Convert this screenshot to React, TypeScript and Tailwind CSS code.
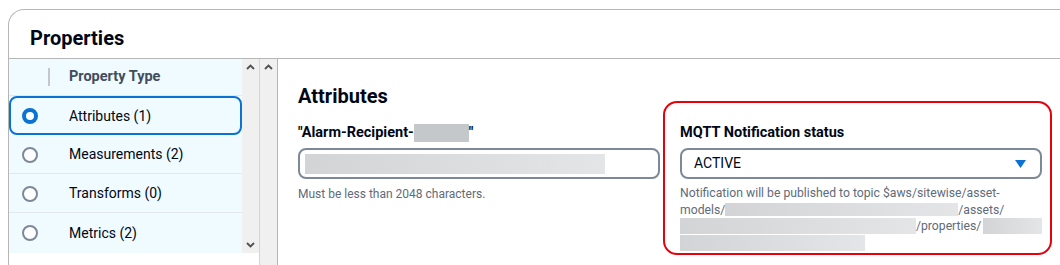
import React from "react";

const ROWS = [
  { label: "Attributes (1)", selected: true },
  { label: "Measurements (2)", selected: false },
  { label: "Transforms (0)", selected: false },
  { label: "Metrics (2)", selected: false },
];

function Radio({ checked }: { checked: boolean }) {
  return checked ? (
    <svg width="16" height="16" viewBox="0 0 16 16">
      <circle cx="8" cy="8" r="6" fill="#ffffff" stroke="#0972d3" strokeWidth="4" />
    </svg>
  ) : (
    <svg width="16" height="16" viewBox="0 0 16 16">
      <circle cx="8" cy="8" r="7" fill="#ffffff" stroke="#7d8998" strokeWidth="2" />
    </svg>
  );
}

function Chevron({ dir }: { dir: "up" | "down" }) {
  return (
    <svg width="9" height="6" viewBox="0 0 9 6">
      <path
        d={dir === "up" ? "M1 5 L4.5 1.5 L8 5" : "M1 1 L4.5 4.5 L8 1"}
        fill="none"
        stroke="#505050"
        strokeWidth="1.8"
      />
    </svg>
  );
}

function Blur({ w, h, className = "" }: { w: string; h: string; className?: string }) {
  return (
    <span
      className={`inline-block align-middle bg-gradient-to-r from-[#d3d4d6] to-[#e4e5e6] ${w} ${h} ${className}`}
    />
  );
}

function TypeList() {
  return (
    <div className="w-[233px] h-[194px] bg-[#f0fbff] flex flex-col">
      <div className="h-[37px] flex items-center border-b border-[#e3e8ee]">
        <div className="ml-[39px] w-[2px] h-[18px] bg-[#c6c6cd]" />
        <span className="ml-[19px] text-[14.5px] font-bold text-[#414d5c]">Property Type</span>
      </div>
      {ROWS.map((row, i) =>
        row.selected ? (
          <div
            key={row.label}
            className="h-[39px] flex items-center border-2 border-[#0972d3] rounded-[8px] pl-[11px] pt-[1px]"
          >
            <Radio checked />
            <span className="ml-[31px] text-[14px] text-[#000716]">{row.label}</span>
          </div>
        ) : (
          <div
            key={row.label}
            className={`h-[39px] flex items-center pl-[13px] pt-[1px] ${
              i < ROWS.length - 1 ? "border-b border-[#e3e8ee]" : ""
            }`}
          >
            <Radio checked={false} />
            <span className="ml-[31px] text-[14px] text-[#000716]">{row.label}</span>
          </div>
        )
      )}
    </div>
  );
}

export default function App() {
  return (
    <div className="w-[1060px] h-[265px] overflow-hidden bg-white font-['Roboto',sans-serif] text-[#000716] pl-[8px] pt-[9px]">
      <div className="h-[256px] border-l border-t border-[#b6b6b6] rounded-tl-[16px] flex flex-col">
        <div className="h-[49px] border-b border-[#b6b6b6] pl-[21px] pt-[16px]">
          <h2 className="text-[20px] leading-[24px] font-bold">Properties</h2>
        </div>

        <div className="flex flex-1">
          <div className="flex flex-col">
            <div className="flex">
              <TypeList />
              <div className="w-[17px] h-[194px] bg-[#f0f0f0] flex flex-col items-center justify-between pt-[5px] pb-[5px]">
                <Chevron dir="up" />
                <Chevron dir="down" />
              </div>
            </div>
          </div>
          <div className="w-[1px] bg-[#d4d4d4]" />
          <div className="w-[17px] bg-[#f0f0f0] flex flex-col items-center pt-[5px]">
            <Chevron dir="up" />
          </div>
          <div className="w-[1px] bg-[#b6b6b6]" />

          <div className="flex-1 pl-[20px] pr-[18px] pt-[25px]">
            <h3 className="text-[20px] leading-[24px] font-bold">Attributes</h3>

            <div className="grid grid-cols-2 gap-[20px] mt-[16px]">
              <div className="flex flex-col">
                <label className="text-[14.5px] leading-[18px] font-bold flex items-center">
                  "Alarm-Recipient-
                  <span className="inline-block w-[55px] h-[18px] bg-[#c5c8cb]" />"
                </label>
                <div className="mt-[6px] h-[31px] border-2 border-[#7d8998] rounded-[8px] flex items-center pl-[5px]">
                  <Blur w="w-[300px]" h="h-[20px]" />
                </div>
                <p className="mt-[7px] text-[12px] leading-[16px] text-[#5f6b7a]">
                  Must be less than 2048 characters.
                </p>
              </div>

              <div className="relative flex flex-col">
                <div className="absolute left-[-17px] right-[-10px] top-[-23px] h-[154px] border-2 border-[#e8000b] rounded-[14px] pointer-events-none" />
                <label className="text-[14.5px] leading-[18px] font-bold">MQTT Notification status</label>
                <div className="mt-[6px] h-[31px] border-2 border-[#7d8998] rounded-[8px] flex items-center justify-between pl-[12px] pr-[14px]">
                  <span className="text-[14px]">ACTIVE</span>
                  <svg width="11" height="8" viewBox="0 0 11 8">
                    <path d="M0 0 L11 0 L5.5 8 Z" fill="#0972d3" />
                  </svg>
                </div>
                <div className="mt-[6px] text-[12.2px] leading-[16.5px] text-[#5f6b7a]">
                  <div>Notification will be published to topic $aws/sitewise/asset-</div>
                  <div className="flex items-center">
                    models/
                    <Blur w="w-[233px]" h="h-[13px]" />
                    /assets/
                  </div>
                  <div className="flex items-center">
                    <Blur w="w-[237px]" h="h-[16px]" />
                    /properties/
                    <Blur w="w-[59px]" h="h-[16px]" className="ml-[2px]" />
                  </div>
                  <div className="flex items-center">
                    <Blur w="w-[185px]" h="h-[16px]" />
                  </div>
                </div>
              </div>
            </div>
          </div>
        </div>
      </div>
    </div>
  );
}
